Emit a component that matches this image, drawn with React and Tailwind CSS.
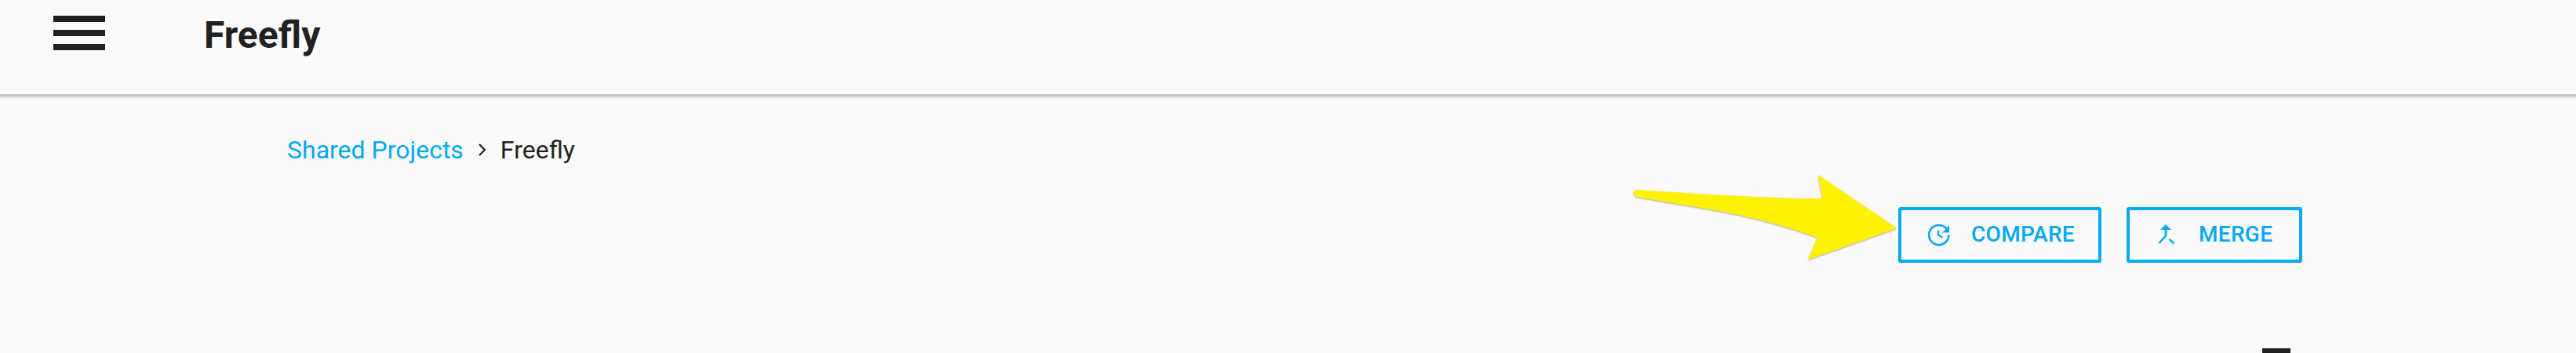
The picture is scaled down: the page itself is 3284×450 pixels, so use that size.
function Hamburger() {
  return (
    <div className="flex h-[44px] w-[66px] flex-col justify-between">
      <div className="h-[8px] bg-[#212121]" />
      <div className="h-[8px] bg-[#212121]" />
      <div className="h-[8px] bg-[#212121]" />
    </div>
  );
}

function HistoryIcon() {
  return (
    <svg width="30" height="30" viewBox="0 0 30 30" fill="none" className="block">
      <path d="M24.2 7.2A12.6 12.6 0 1 0 27.4 15.5" stroke="#03a9f4" strokeWidth="2.6" />
      <path d="M28 3.5V12.5H19Z" fill="#03a9f4" />
      <path d="M14 9.5V15.5L19.5 19" stroke="#03a9f4" strokeWidth="2.2" />
    </svg>
  );
}

function MergeIcon() {
  return (
    <svg width="22" height="28" viewBox="0 0 22 28" fill="none" className="block">
      <path d="M10 1L17 8H3Z" fill="#03a9f4" />
      <path d="M10 7V15.5L1.5 25" stroke="#03a9f4" strokeWidth="2.6" />
      <path d="M14.5 20L20.5 25.5" stroke="#03a9f4" strokeWidth="2.6" />
    </svg>
  );
}

function OutlineButton({ icon, label, className }) {
  return (
    <button className={`flex h-[71px] items-center rounded-[3px] border-[4px] border-[#03a9f4] pb-[2px] text-[28px] font-medium tracking-[0.3px] text-[#03a9f4] ${className}`}>
      {icon}
      <span>{label}</span>
    </button>
  );
}

export default function App() {
  return (
    <div className="relative h-[450px] overflow-hidden bg-[#fafafa] font-['Roboto',sans-serif]">
      <header className="flex h-[123px] items-start border-b-[3px] border-[#c4c4c4] pl-[68px] pt-[20px] shadow-[0_2px_3px_rgba(0,0,0,0.12)]">
        <Hamburger />
        <h1 className="ml-[126px] text-[48px] leading-[50px] font-bold text-[#212121]">Freefly</h1>
      </header>

      <nav className="mt-[46px] flex items-center pl-[366px] text-[32px] leading-[44px] text-[#212121]">
        <a className="text-[#03a9f4]">Shared Projects</a>
        <svg width="14" height="20" viewBox="0 0 14 20" fill="none" className="ml-[17px] mr-[16px]">
          <path d="M3 3L10 10L3 17" stroke="#212121" strokeWidth="2.2" />
        </svg>
        <span>Freefly</span>
      </nav>

      <div className="mt-[51px] flex justify-end gap-[32px] pr-[349px]">
        <OutlineButton
          className="w-[259px] pl-[33px]"
          icon={<HistoryIcon />}
          label={<span className="ml-[26px] block">COMPARE</span>}
        />
        <OutlineButton
          className="w-[224px] pl-[36px]"
          icon={<MergeIcon />}
          label={<span className="ml-[30px] block">MERGE</span>}
        />
      </div>

      <div className="mt-[109px] flex justify-end pr-[364px]">
        <div className="h-[6px] w-[36px] bg-[#212121]" />
      </div>

      <svg width="360" height="130" viewBox="0 0 360 130" className="absolute left-[2070px] top-[215px] drop-shadow-[0_1px_1px_rgba(90,90,60,0.5)]">
        <path
          d="M17 27C80 31 190 39 253 38L248 8L348 76L235 116L247 88C215 76 180 66 137 57C90 48 50 42 17 36C11 34 11 27 17 27Z"
          fill="#fff200"
        />
      </svg>
    </div>
  );
}
